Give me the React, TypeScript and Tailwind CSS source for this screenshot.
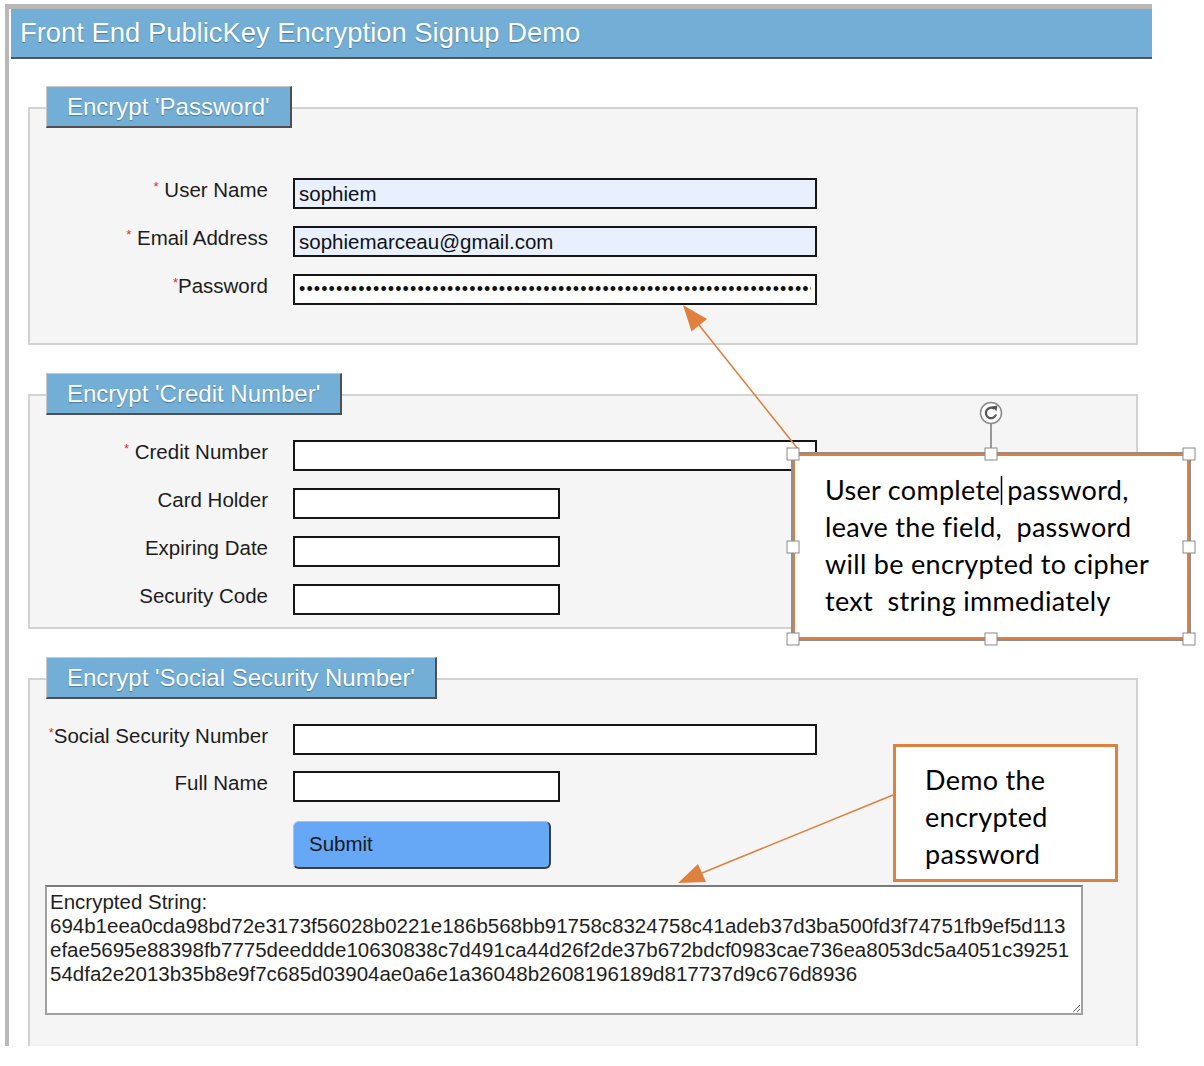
import React from "react";

const HEX = [
  "Encrypted String:",
  "694b1eea0cda98bd72e3173f56028b0221e186b568bb91758c8324758c41adeb37d3ba500fd3f74751fb9ef5d113",
  "efae5695e88398fb7775deeddde10630838c7d491ca44d26f2de37b672bdcf0983cae736ea8053dc5a4051c39251",
  "54dfa2e2013b35b8e9f7c685d03904ae0a6e1a36048b2608196189d817737d9c676d8936",
].join("\n");

function Star() {
  return <span className="text-[#e42a2a] text-[13px] relative top-[-6px]">*</span>;
}

function Row({
  label,
  req,
  space,
  children,
}: {
  label: string;
  req?: boolean;
  space?: boolean;
  children: React.ReactNode;
}) {
  return (
    <div className="flex items-start">
      <div className="w-[238px] text-right text-[20.5px] leading-[24px] text-[#1c1c1c] whitespace-pre">
        {req && <Star />}
        {req && space ? " " : ""}
        {label}
      </div>
      <div className="ml-[25px]">{children}</div>
    </div>
  );
}

function Field({
  wide,
  value,
  autofill,
  password,
}: {
  wide?: boolean;
  value?: string;
  autofill?: boolean;
  password?: boolean;
}) {
  return (
    <input
      readOnly
      type={password ? "password" : "text"}
      value={value ?? ""}
      className={
        (wide ? "w-[524px] " : "w-[267px] ") +
        (autofill ? "bg-[#e8f0fe] " : "bg-white ") +
        (password ? "text-[18px] tracking-[1.1px] " : "text-[20.5px] ") +
        "h-[31px] border-2 border-[#151515] px-[4px] text-[#111] outline-none block"
      }
    />
  );
}

function Section({
  title,
  boxClass,
  children,
}: {
  title: string;
  boxClass: string;
  children: React.ReactNode;
}) {
  return (
    <div className="flex flex-col">
      <div className="relative z-10 ml-[18px] w-fit h-[42px] bg-[#72aed5] px-[20px] flex items-center text-white text-[24px] [text-shadow:0_1px_1px_rgba(0,0,0,0.3)] border-t border-l border-t-[#c9c9c9] border-l-[#c9c9c9] border-r-2 border-b-2 border-r-[#4f4f4f] border-b-[#4f4f4f]">
        {title}
      </div>
      <div className={"-mt-[21px] border-2 border-[#d2d2d2] bg-[#f5f5f5] " + boxClass}>{children}</div>
    </div>
  );
}

const ORANGE = "#e0803f";

export default function App() {
  const handles: [number, number][] = [
    [793, 454],
    [991, 454],
    [1189, 454],
    [793, 547],
    [1189, 547],
    [793, 639],
    [991, 639],
    [1189, 639],
  ];
  return (
    <div className="relative w-[1204px] h-[1066px] bg-white overflow-hidden font-['Liberation_Sans',Arial,sans-serif]">
      <div className="ml-[5px] mt-[4px] w-[1147px] h-[1042px] border-t-[5px] border-l-4 border-[#b8b8b8] pl-[2px] overflow-hidden">
        <div className="h-[50px] bg-[#72aed5] border-b-2 border-[#555] pl-[9px] flex items-center text-white text-[27.4px] [text-shadow:0_1px_1px_rgba(0,0,0,0.3)]">
          Front End PublicKey Encryption Signup Demo
        </div>

        <div className="ml-[17px] w-[1110px] pt-[27px] flex flex-col gap-[28px]">
          <Section title="Encrypt 'Password'" boxClass="pt-[69px] pb-[38px]">
            <div className="flex flex-col gap-[17px]">
              <Row label="User Name" req space>
                <Field wide autofill value="sophiem" />
              </Row>
              <Row label="Email Address" req space>
                <Field wide autofill value="sophiemarceau@gmail.com" />
              </Row>
              <Row label="Password" req>
                <Field wide password value={"x".repeat(80)} />
              </Row>
            </div>
          </Section>

          <Section title="Encrypt 'Credit Number'" boxClass="pt-[44px] pb-[12px]">
            <div className="flex flex-col gap-[17px]">
              <Row label="Credit Number" req space>
                <Field wide />
              </Row>
              <Row label="Card Holder">
                <Field />
              </Row>
              <Row label="Expiring Date">
                <Field />
              </Row>
              <Row label="Security Code">
                <Field />
              </Row>
            </div>
          </Section>

          <Section title="Encrypt 'Social Security Number'" boxClass="pt-[44px] pb-[60px]">
            <div className="flex flex-col">
              <Row label="Social Security Number" req>
                <Field wide />
              </Row>
              <div className="mt-[16px]">
                <Row label="Full Name">
                  <Field />
                </Row>
              </div>
              <div className="mt-[19px] ml-[263px]">
                <button className="w-[258px] h-[48px] rounded-[6px] bg-[#66a8f5] text-left pl-[15px] text-[20.5px] text-[#1a1a1a] border-t border-l border-t-[#9cc4f5] border-l-[#9cc4f5] border-r-2 border-b-2 border-r-[#3d3d3d] border-b-[#3d3d3d]">
                  Submit
                </button>
              </div>
              <textarea
                readOnly
                wrap="off"
                value={HEX}
                className="mt-[16px] ml-[15px] w-[1038px] h-[130px] border-2 border-[#a0a0a0] border-t-[#7a7a7a] bg-white p-[3px] text-[20.5px] leading-[24px] text-[#1e1e1e] outline-none overflow-hidden"
              />
            </div>
          </Section>
        </div>
      </div>

      {/* Annotation 1 */}
      <div className="absolute left-[793px] top-[454px] w-[396px] h-[185px] bg-white border-2 border-[#e0803f] shadow-[0_0_0_2px_#8e8e8e] pl-[30px] pt-[15px] font-['Lato',sans-serif] text-[27px] tracking-[0.3px] leading-[37px] text-black whitespace-pre">
        {"User complete password,\nleave the field,  password\nwill be encrypted to cipher\ntext  string immediately"}
      </div>

      {/* Annotation 2 */}
      <div className="absolute left-[893px] top-[744px] w-[225px] h-[138px] bg-white border-[3px] border-[#e0803f] pl-[29px] pt-[14px] font-['Lato',sans-serif] text-[27px] tracking-[0.3px] leading-[37px] text-black whitespace-pre overflow-hidden">
        {"Demo the\nencrypted\npassword"}
      </div>

      <svg className="absolute left-0 top-0 pointer-events-none" width="1204" height="1066" viewBox="0 0 1204 1066">
        <line x1="1001.5" y1="476" x2="1001.5" y2="505" stroke="#000" strokeWidth="1.5" />
        <line x1="798" y1="449" x2="699" y2="325" stroke={ORANGE} strokeWidth="1.6" />
        <polygon points="683,305 707,319 691.5,331.6" fill={ORANGE} />
        <line x1="893" y1="795" x2="702" y2="873" stroke={ORANGE} strokeWidth="1.6" />
        <polygon points="678,883 706,882 698,864" fill={ORANGE} />
        <line x1="991" y1="424" x2="991" y2="450" stroke="#7a7a7a" strokeWidth="1.5" />
        <circle cx="991" cy="413" r="10.5" fill="white" stroke="#8a8a8a" strokeWidth="1.5" />
        <path d="M996 414.5 A5.2 5.2 0 1 1 994.2 408.8" fill="none" stroke="#555" strokeWidth="2.2" />
        <polygon points="991.8,406.5 997.5,405.5 996.5,411.2" fill="#555" />
        {handles.map(([x, y], i) => (
          <rect key={i} x={x - 6} y={y - 6} width="12" height="12" fill="white" stroke="#8a8a8a" strokeWidth="1" />
        ))}
      </svg>
    </div>
  );
}
